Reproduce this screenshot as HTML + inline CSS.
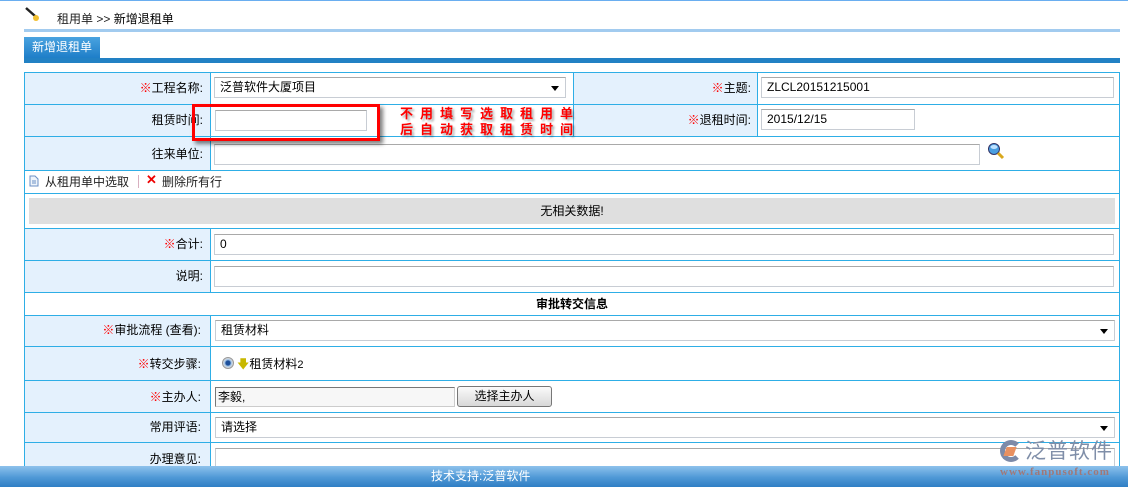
<!DOCTYPE html>
<html><head><meta charset="utf-8"><style>
*{margin:0;padding:0;box-sizing:border-box}
body{width:1128px;height:487px;overflow:hidden;background:#fff;font-family:"Liberation Sans","Noto Sans CJK SC",sans-serif;font-size:12px;color:#000;position:relative}
.a{position:absolute}
.lbl{background:#e4f1fd}
.hl{position:absolute;height:1px;background:#2eaee6}
.vl{position:absolute;width:1px;background:#2eaee6}
.inp{position:absolute;background:#fff;border:1px solid #c8cdd4;border-top-color:#a9a9a9;height:21px;padding-left:5px;line-height:19px;font-size:12px}
.lt{position:absolute;text-align:right;line-height:16px}
.r{color:#f00}
.arr{position:absolute;right:6px;top:8px;width:0;height:0;border-left:4px solid transparent;border-right:4px solid transparent;border-top:5px solid #000}
</style></head><body>
<div class="a" style="left:0;top:0;width:1128px;height:1px;background:#6aaef0"></div>
<svg class="a" style="left:24px;top:6px" width="16" height="16"><line x1="2" y1="2" x2="11" y2="10" stroke="#222" stroke-width="2.5"/><circle cx="12" cy="12" r="3" fill="#f2c030"/></svg>
<div class="a" style="left:57px;top:10px;font-size:12px;color:#222">租用单 &gt;&gt; <span style="color:#000">新增退租单</span></div>
<div class="a" style="left:24px;top:29px;width:1096px;height:3px;background:#a2cbef"></div>
<div class="a" style="left:24px;top:37px;width:76px;height:21px;background:linear-gradient(#4aa3e0,#1e7ec8);color:#fff;font-size:12px;line-height:21px;text-align:center">新增退租单</div>
<div class="a" style="left:24px;top:58px;width:1096px;height:5px;background:#2281c4"></div>

<div class="a lbl" style="left:25px;top:72px;width:185px;height:98px"></div>
<div class="a lbl" style="left:573px;top:72px;width:185px;height:64px"></div>
<div class="a lbl" style="left:25px;top:228px;width:185px;height:64px"></div>
<div class="a lbl" style="left:25px;top:315px;width:185px;height:152px"></div>
<div class="a" style="left:29px;top:198px;width:1086px;height:26px;background:#dfdfdf;text-align:center;line-height:26px">无相关数据!</div>

<div class="hl" style="left:24px;top:72px;width:1096px"></div>
<div class="hl" style="left:24px;top:104px;width:1096px"></div>
<div class="hl" style="left:24px;top:136px;width:1096px"></div>
<div class="hl" style="left:24px;top:170px;width:1096px"></div>
<div class="hl" style="left:24px;top:193px;width:1096px"></div>
<div class="hl" style="left:24px;top:228px;width:1096px"></div>
<div class="hl" style="left:24px;top:260px;width:1096px"></div>
<div class="hl" style="left:24px;top:292px;width:1096px"></div>
<div class="hl" style="left:24px;top:315px;width:1096px"></div>
<div class="hl" style="left:24px;top:346px;width:1096px"></div>
<div class="hl" style="left:24px;top:380px;width:1096px"></div>
<div class="hl" style="left:24px;top:412px;width:1096px"></div>
<div class="hl" style="left:24px;top:442px;width:1096px"></div>
<div class="vl" style="left:24px;top:72px;height:395px"></div>
<div class="vl" style="left:1119px;top:72px;height:395px"></div>
<div class="vl" style="left:210px;top:72px;height:98px"></div>
<div class="vl" style="left:573px;top:72px;height:64px"></div>
<div class="vl" style="left:757px;top:72px;height:64px"></div>
<div class="vl" style="left:210px;top:228px;height:64px"></div>
<div class="vl" style="left:210px;top:315px;height:152px"></div>

<div class="lt" style="left:25px;width:178px;top:80px"><span class="r">※</span>工程名称:</div>
<div class="lt" style="left:25px;width:178px;top:112px">租赁时间:</div>
<div class="lt" style="left:25px;width:178px;top:146px">往来单位:</div>
<div class="lt" style="left:573px;width:178px;top:80px"><span class="r">※</span>主题:</div>
<div class="lt" style="left:573px;width:178px;top:112px"><span class="r">※</span>退租时间:</div>
<div class="lt" style="left:25px;width:178px;top:236px"><span class="r">※</span>合计:</div>
<div class="lt" style="left:25px;width:178px;top:268px">说明:</div>
<div class="a" style="left:24px;width:1096px;top:296px;text-align:center;font-weight:bold;line-height:16px">审批转交信息</div>
<div class="lt" style="left:25px;width:176px;top:322px"><span class="r">※</span>审批流程 (查看):</div>
<div class="lt" style="left:25px;width:176px;top:356px"><span class="r">※</span>转交步骤:</div>
<div class="lt" style="left:25px;width:176px;top:389px"><span class="r">※</span>主办人:</div>
<div class="lt" style="left:25px;width:176px;top:419px">常用评语:</div>
<div class="lt" style="left:25px;width:176px;top:451px">办理意见:</div>

<div class="inp" style="left:214px;top:77px;width:352px">泛普软件大厦项目<div class="arr"></div></div>
<div class="inp" style="left:761px;top:77px;width:353px">ZLCL20151215001</div>
<div class="inp" style="left:215px;top:110px;width:152px"></div>
<div class="inp" style="left:761px;top:109px;width:154px">2015/12/15</div>
<div class="inp" style="left:214px;top:144px;width:766px"></div>
<svg class="a" style="left:987px;top:142px" width="18" height="18"><circle cx="7" cy="7" r="5.5" fill="#4a9ee0" stroke="#336" stroke-width="1"/><ellipse cx="7" cy="5" rx="3.5" ry="2" fill="#bfe2ff"/><line x1="11" y1="11" x2="16" y2="16" stroke="#d9a81e" stroke-width="3"/></svg>
<div class="inp" style="left:214px;top:234px;width:900px">0</div>
<div class="inp" style="left:214px;top:266px;width:900px"></div>
<div class="inp" style="left:215px;top:320px;width:900px">租赁材料<div class="arr"></div></div>
<div class="inp" style="left:215px;top:417px;width:900px">请选择<div class="arr"></div></div>
<div class="inp" style="left:215px;top:448px;width:900px;height:25px"></div>
<div class="inp" style="left:215px;top:387px;width:240px;height:20px;background:#f7f7f7;border-color:#777 #ccc #ccc #777;padding-left:2px">李毅,</div>
<div class="a" style="left:457px;top:386px;width:95px;height:21px;border:1px solid #777;border-radius:3px;background:linear-gradient(#fafafa,#d8d8d8);text-align:center;line-height:19px">选择主办人</div>
<div class="a" style="left:222px;top:357px;width:12px;height:12px;border-radius:50%;background:radial-gradient(circle,#1c4f9a 30%,#9fc2e6 45%,#ddd 70%);border:1px solid #999"></div>
<div class="a" style="left:237px;top:356px;line-height:16px"><span style="color:#c8b800">🡇</span>租赁材料<span style="font-size:11px">2</span></div>

<svg class="a" style="left:29px;top:175px" width="10" height="12"><path d="M1 1h5l3 3v7H1z" fill="#eef4fb" stroke="#6b8fc4"/><path d="M3 6h4M3 8h4" stroke="#6b8fc4"/></svg>
<div class="a" style="left:45px;top:174px;color:#222;line-height:16px">从租用单中选取</div>
<div class="a" style="left:138px;top:175px;width:1px;height:13px;background:#d8b0c0"></div>
<div class="a" style="left:146px;top:172px;color:#e00;font-weight:bold;font-size:13px">✕</div>
<div class="a" style="left:162px;top:174px;color:#222;line-height:16px">删除所有行</div>

<div class="a" style="left:192px;top:104px;width:188px;height:37px;border:3px solid #f00;box-shadow:3px 3px 4px rgba(0,0,0,.5)"></div>
<div class="a" style="left:400px;top:106px;color:#f00;font-weight:bold;font-size:13px;line-height:16px;letter-spacing:7px;text-shadow:2px 2px 2px rgba(0,0,0,.35)">不用填写选取租用单<br>后自动获取租赁时间</div>

<div class="a" style="left:1000px;top:440px;width:22px;height:22px;border-radius:50%;border:5px solid #7c8aa8;border-right-color:transparent"></div>
<div class="a" style="left:1005px;top:447px;width:10px;height:9px;background:#e89060;transform:skewX(-20deg)"></div>
<div class="a" style="left:1025px;top:440px;font-size:21px;color:#7f8ea8;letter-spacing:1px;line-height:24px">泛普软件</div>

<div class="a" style="left:0;top:466px;width:1128px;height:21px;background:linear-gradient(#8ec2ec,#4f98d6 55%,#2f7ec4)"></div>
<div class="a" style="left:431px;top:466px;color:#fff;line-height:21px;font-size:12px">技术支持:泛普软件</div>
<div class="a" style="left:1000px;top:466px;font-size:11px;font-family:'Liberation Serif',serif;color:#a07878;letter-spacing:1px;font-weight:bold">www.fanpusoft.com</div>
</body></html>
